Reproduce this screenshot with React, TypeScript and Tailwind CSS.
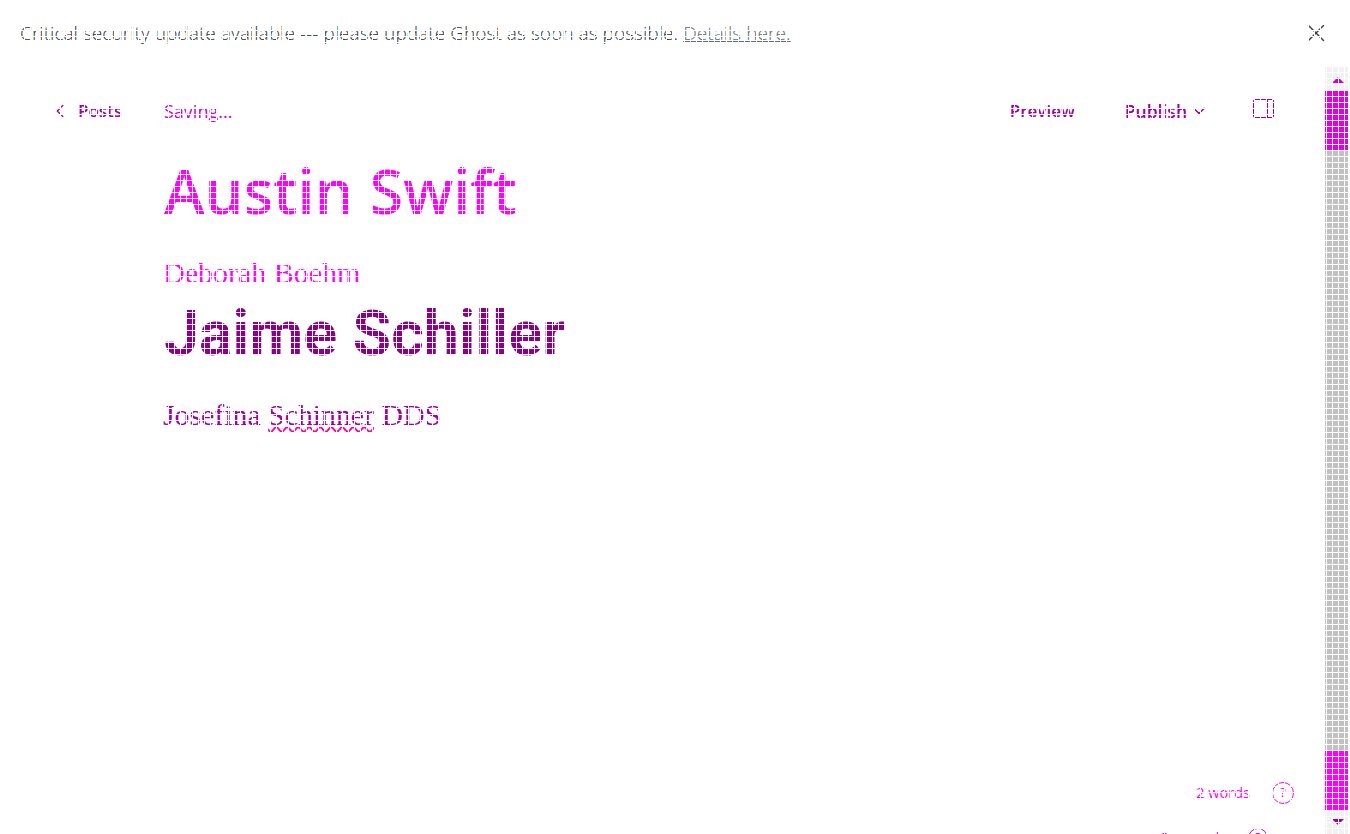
import React from "react";
import { X, ChevronLeft, ChevronDown } from "lucide-react";

const sans = "font-['Open_Sans','Noto_Sans',sans-serif]";
const serif = "font-['Liberation_Serif',serif]";

const Scrollbar = () => {
  return (
    <div className="w-[23px] h-full bg-[#f1f1f1] flex flex-col items-center mr-[2px] shrink-0">
      <div className="h-[25px] w-full flex items-center justify-center pl-[3px] pt-[3px] shrink-0">
        <div className="w-0 h-0 border-x-[6px] border-x-transparent border-b-[6px] border-b-[#cc00cc]"></div>
      </div>
      <div className="w-full h-[720px] bg-[#c1c1c1] flex flex-col justify-between shrink-0">
        <div className="h-[60px] bg-[#e000e0]"></div>
        <div className="h-[60px] bg-[#ff00ff]"></div>
      </div>
      <div className="flex-1 w-full flex items-center justify-center pl-[3px] pb-[2px]">
        <div className="w-0 h-0 border-x-[6px] border-x-transparent border-t-[6px] border-t-[#a000a0]"></div>
      </div>
    </div>
  );
};

export default function App() {
  return (
    <div className={`relative w-[1350px] h-[834px] overflow-hidden bg-white flex flex-col ${sans}`}>
      <div className="h-[66px] shrink-0 flex items-center justify-between pl-5 pr-[19px] text-[#2f373c] text-[19.15px] font-light">
        <p>
          Critical security update available --- please update Ghost as soon as possible.{" "}
          <span className="underline text-[#626d78]">Details here.</span>
        </p>
        <X className="w-[30px] h-[30px] text-[#394047]" strokeWidth={1.1} />
      </div>
      <div className="flex flex-1 min-h-0">
        <div className="flex-1 min-w-0 flex flex-col overflow-hidden">
          <div className="h-[90px] shrink-0 flex items-center pl-[49px] pr-[51px] text-[17px] text-[#a000a0]">
            <ChevronLeft className="w-[22px] h-[22px]" strokeWidth={1.5} />
            <span className="ml-[7px] font-semibold w-[86px]">Posts</span>
            <span className="text-[#cc00cc] text-[18px]">Saving...</span>
            <span className="ml-auto font-semibold">Preview</span>
            <span className="ml-[50px] font-semibold text-[17.5px]">Publish</span>
            <ChevronDown className="ml-[2px] w-[20px] h-[20px]" strokeWidth={2} />
            <div className="ml-[44px] w-[21px] h-[19px] mb-[6px] border border-[#a000a0] flex justify-end rounded-[2px]">
              <div className="w-[6px] border-l border-[#a000a0]"></div>
            </div>
          </div>
          <div className="pl-[164px]">
            <h1 className="text-[61.3px] leading-[68px] font-semibold text-[#ff00ff]">Austin Swift</h1>
            <p className={`${serif} -ml-[1px] mt-[31px] text-[30px] leading-[36px] text-[#ff00ff]`}>Deborah Boehm</p>
            <h2 className="mt-[9px] font-['Roboto',sans-serif] text-[62.6px] leading-[68px] font-bold text-[#8b008b]">Jaime Schiller</h2>
            <p className={`${serif} -ml-[1px] mt-[29px] text-[29.8px] leading-[36px] text-[#a000a0]`}>
              Josefina{" "}
              <span className="underline decoration-wavy decoration-[#ff00a0] decoration-[1.5px]">Schinner</span> DDS
            </p>
          </div>
          <div className="mt-auto mb-[-14px] pr-[31px] flex flex-col items-end gap-[23px] text-[14.5px] text-[#ff00ff]">
            <div className="flex items-center gap-[22px]">
              <span>2 words</span>
              <div className="w-[22px] h-[22px] rounded-full border border-[#ff00ff] flex items-center justify-center text-[13px]">?</div>
            </div>
            <div className="flex items-center gap-[22px] mr-[26px] text-[14px] text-[#cc00cc]">
              <span>2 seconds</span>
              <div className="w-[20px] h-[20px] rounded-full border border-[#cc00cc] flex items-center justify-center text-[13px]">?</div>
            </div>
          </div>
        </div>
        <Scrollbar />
      </div>
      <div className="absolute inset-0 pointer-events-none bg-[linear-gradient(to_right,white_1px,transparent_1px),linear-gradient(to_bottom,white_1px,transparent_1px)] bg-[size:6px_6px]"></div>
    </div>
  );
}
